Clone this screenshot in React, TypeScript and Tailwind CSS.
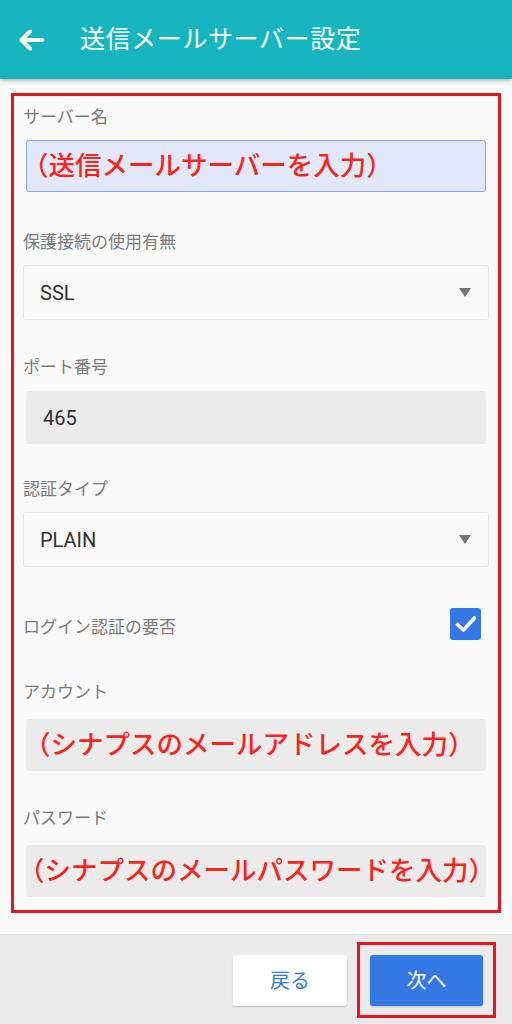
import type { ReactNode } from "react";

const jp = { fontFamily: 'Roboto, "Noto Sans CJK JP", sans-serif' };

function Label({ children, className = "" }: { children: ReactNode; className?: string }) {
  return (
    <p className={`h-5 text-[17px] leading-5 text-[#7a7a7a] ${className}`}>{children}</p>
  );
}

function Caret() {
  return (
    <svg width="12" height="9" viewBox="0 0 12 9" className="mr-[17px]">
      <path d="M0 0 H12 L6 9 Z" fill="#757575" />
    </svg>
  );
}

function SelectBox({ value }: { value: string }) {
  return (
    <div className="mt-[13px] flex h-[55px] items-center justify-between rounded-[3px] border border-[#e4e4e4] bg-[#fafafa] pl-[16px]">
      <span className="text-[20px] text-[#303030]">{value}</span>
      <Caret />
    </div>
  );
}

function RedHint({ children, className = "" }: { children: ReactNode; className?: string }) {
  return (
    <span
      className={`whitespace-nowrap text-[26.5px] font-medium leading-none text-[#f5261c] ${className}`}
    >
      {children}
    </span>
  );
}

export default function App() {
  return (
    <div className="flex min-h-screen flex-col bg-[#fafafa]" style={jp}>
      {/* App bar */}
      <header className="relative z-10 flex h-[79px] shrink-0 items-center bg-[#16b5bf] shadow-[0_2px_4px_rgba(0,0,0,0.25)]">
        <svg width="26" height="22" viewBox="0 0 26 22" className="ml-[18px]">
          <path
            d="M24 11 H4 M12 2.5 L3.5 11 L12 19.5"
            fill="none"
            stroke="#ffffff"
            strokeWidth="4"
            strokeLinecap="round"
            strokeLinejoin="round"
          />
        </svg>
        <h1 className="ml-[36px] text-[25px] font-normal tracking-[0.6px] text-white">
          送信メールサーバー設定
        </h1>
      </header>

      {/* Form, wrapped by the red annotation box */}
      <div className="flex-1">
        <div className="mx-[11px] mt-[14px] h-[820px] border-[3px] border-[#e8141e] px-[9px] pt-[11px]">
          <Label>サーバー名</Label>
          <div className="mx-[3px] mt-[13px] flex h-[52px] items-center rounded-[3px] border border-[#8ca4f4] bg-[#e0e8f9]">
            <RedHint className="-ml-[5px]">（送信メールサーバーを入力）</RedHint>
          </div>

          <Label className="mt-[40px]">保護接続の使用有無</Label>
          <SelectBox value="SSL" />

          <Label className="mt-[37px]">ポート番号</Label>
          <div className="mx-[3px] mt-[14px] flex h-[53px] items-center rounded-[3px] bg-[#ebebeb] pl-[17px]">
            <span className="text-[20px] text-[#303030]">465</span>
          </div>

          <Label className="mt-[35px]">認証タイプ</Label>
          <SelectBox value="PLAIN" />

          <div className="mt-[41px] flex h-[32px] items-center justify-between">
            <span className="mt-[8px] text-[17px] text-[#7a7a7a]">ログイン認証の要否</span>
            <div className="mr-[8px] flex h-[32px] w-[31px] items-center justify-center rounded-[3px] bg-[#3478e5]">
              <svg width="22" height="18" viewBox="0 0 22 18">
                <path
                  d="M2.5 9.5 L8.5 15 L19.5 3"
                  fill="none"
                  stroke="#ffffff"
                  strokeWidth="3.6"
                  strokeLinecap="round"
                  strokeLinejoin="round"
                />
              </svg>
            </div>
          </div>

          <Label className="mt-[42px]">アカウント</Label>
          <div className="mx-[3px] mt-[17px] flex h-[52px] items-center rounded-[3px] bg-[#ebebeb]">
            <RedHint className="-ml-[2px]">（シナプスのメールアドレスを入力）</RedHint>
          </div>

          <Label className="mt-[37px]">パスワード</Label>
          <div className="mx-[3px] mt-[17px] flex h-[52px] items-center rounded-[3px] bg-[#ebebeb]">
            <RedHint className="-ml-[8px]">（シナプスのメールパスワードを入力）</RedHint>
          </div>
        </div>
      </div>

      {/* Bottom action bar */}
      <footer className="mt-[21px] flex h-[90px] shrink-0 items-start justify-end gap-[10px] border-t border-[#e2e2e2] bg-[#ebebeb] pr-[16px] pt-[7px]">
        <button className="mt-[13px] h-[51px] w-[114px] rounded-[3px] bg-white text-[20px] text-[#3a7be2] shadow-[0_1px_2px_rgba(0,0,0,0.2)]">
          戻る
        </button>
        <div className="border-[3px] border-[#e8141e] p-[10px] pb-[9px]">
          <button className="h-[51px] w-[113px] rounded-[3px] bg-[#3478e6] text-[20px] text-white shadow-[0_1px_2px_rgba(0,0,0,0.2)]">
            次へ
          </button>
        </div>
      </footer>
    </div>
  );
}
